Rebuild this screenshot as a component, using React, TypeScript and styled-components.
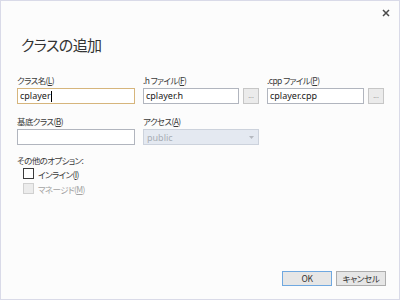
import React from "react";
import styled, { createGlobalStyle } from "styled-components";

const Global = createGlobalStyle`
  html, body { margin: 0; padding: 0; background: #ffffff; }
  * { box-sizing: border-box; }
`;

const Window = styled.div`
  width: 400px;
  height: 300px;
  border: 1px solid #d9dae8;
  background: #fcfcfc;
  display: flex;
  flex-direction: column;
  font-family: "Noto Sans CJK JP", "Noto Sans", sans-serif;
  font-feature-settings: "palt" 1;
  color: #262626;
`;

const TitleBar = styled.div`
  height: 23px;
  display: flex;
  justify-content: flex-end;
  align-items: center;
  padding-right: 8px;
`;

const CloseButton = styled.div`
  width: 10px;
  height: 10px;
  display: flex;
  align-items: center;
  justify-content: center;
`;

const Title = styled.div`
  margin: 11px 0 0 20px;
  font-size: 15px;
  line-height: 20px;
  letter-spacing: -0.6px;
  color: #333333;
`;

const Form = styled.div`
  margin: 19px 0 0 16px;
  display: grid;
  grid-template-columns: 118px 116px 117px;
  column-gap: 8px;
  row-gap: 11px;
`;

const Field = styled.div`
  display: flex;
  flex-direction: column;
  gap: 2px;
`;

const Label = styled.div<{ $disabled?: boolean }>`
  font-size: 8.5px;
  line-height: 12px;
  height: 12px;
  color: ${(p) => (p.$disabled ? "#a3a3a3" : "#3a3a3a")};
  letter-spacing: -0.6px;
  white-space: nowrap;
  u { text-decoration: underline; text-underline-offset: 1px; }
`;

const InputRow = styled.div`
  display: flex;
  gap: 4px;
`;

const Input = styled.div<{ $focused?: boolean }>`
  flex: 1;
  height: 16px;
  border: 1px solid ${(p) => (p.$focused ? "#d6b57c" : "#b1b5be")};
  background: #ffffff;
  font-family: "Noto Sans", sans-serif;
  font-size: 9px;
  line-height: 14px;
  padding-left: 2px;
  color: #1a1a1a;
  display: flex;
  align-items: center;
  white-space: nowrap;
`;

const Caret = styled.span`
  display: inline-block;
  width: 1px;
  height: 11px;
  background: #000;
`;

const BrowseButton = styled.div`
  width: 16px;
  height: 16px;
  border: 1px solid #c6c6c6;
  background: #ebebeb;
  color: #9a9a9a;
  font-size: 7px;
  line-height: 14px;
  text-align: center;
  font-family: "Noto Sans", sans-serif;
`;

const Select = styled.div`
  width: 116px;
  height: 16px;
  border: 1px solid #ccd2dc;
  background: #e4e9f1;
  font-family: "Noto Sans", sans-serif;
  font-size: 9px;
  color: #a8adb5;
  display: flex;
  align-items: center;
  justify-content: space-between;
  padding: 0 4px 0 3px;
`;

const Options = styled.div`
  margin: 9px 0 0 16px;
  display: flex;
  flex-direction: column;
`;

const CheckRow = styled.div`
  display: flex;
  align-items: center;
  gap: 4px;
  height: 15px;
  margin-left: 6px;
`;

const Box = styled.div<{ $disabled?: boolean }>`
  width: 11px;
  height: 11px;
  border: 1px solid ${(p) => (p.$disabled ? "#d0d0d0" : "#3a3a3a")};
  background: ${(p) => (p.$disabled ? "#ececec" : "#ffffff")};
`;

const Footer = styled.div`
  margin-top: auto;
  display: flex;
  justify-content: flex-end;
  gap: 4px;
  padding: 0 13px 13px 0;
`;

const Button = styled.div<{ $default?: boolean }>`
  width: 50px;
  height: 15px;
  border: 1px solid ${(p) => (p.$default ? "#6fa8e0" : "#adadad")};
  background: #e6e6e6;
  font-size: 8.5px;
  line-height: 13px;
  text-align: center;
  color: #333;
  letter-spacing: -0.3px;
`;

export default function App() {
  return (
    <>
      <Global />
      <Window>
        <TitleBar>
          <CloseButton>
            <svg width="8" height="8" viewBox="0 0 8 8">
              <path d="M1 1 L7 7 M7 1 L1 7" stroke="#4a4a4a" strokeWidth="1.5" />
            </svg>
          </CloseButton>
        </TitleBar>
        <Title>クラスの追加</Title>
        <Form>
          <Field>
            <Label>クラス名(<u>L</u>)</Label>
            <Input $focused>
              cplayer<Caret />
            </Input>
          </Field>
          <Field>
            <Label>.h ファイル(<u>F</u>)</Label>
            <InputRow>
              <Input>cplayer.h</Input>
              <BrowseButton>...</BrowseButton>
            </InputRow>
          </Field>
          <Field>
            <Label>.cpp ファイル(<u>P</u>)</Label>
            <InputRow>
              <Input>cplayer.cpp</Input>
              <BrowseButton>...</BrowseButton>
            </InputRow>
          </Field>
          <Field>
            <Label>基底クラス(<u>B</u>)</Label>
            <Input />
          </Field>
          <Field>
            <Label>アクセス(<u>A</u>)</Label>
            <Select>
              <span>public</span>
              <svg width="5" height="3" viewBox="0 0 5 3">
                <path d="M0 0 L5 0 L2.5 3 Z" fill="#b5b9c0" />
              </svg>
            </Select>
          </Field>
        </Form>
        <Options>
          <Label>その他のオプション:</Label>
          <CheckRow>
            <Box />
            <Label>インライン(<u>I</u>)</Label>
          </CheckRow>
          <CheckRow>
            <Box $disabled />
            <Label $disabled>マネージド(<u>M</u>)</Label>
          </CheckRow>
        </Options>
        <Footer>
          <Button $default>OK</Button>
          <Button>キャンセル</Button>
        </Footer>
      </Window>
    </>
  );
}
